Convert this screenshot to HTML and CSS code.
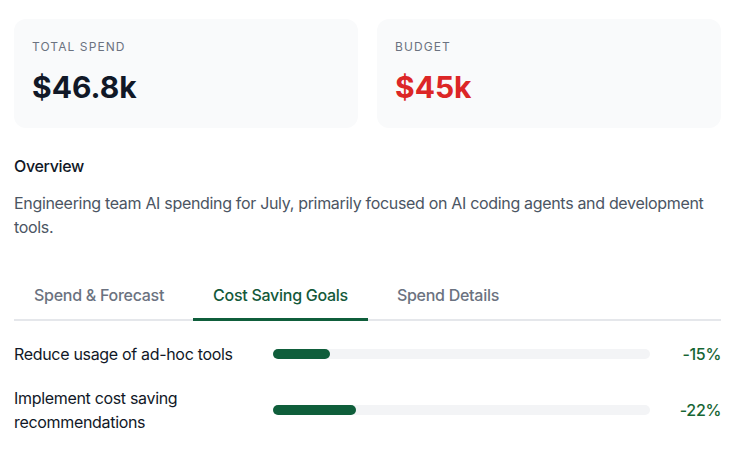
FILE: index.html
```html
<!DOCTYPE html>
<html lang="en">
<head>
  <meta charset="UTF-8">
  <title>AI Spend</title>
  <meta name="viewport" content="width=device-width, initial-scale=1.0">
  <link rel="stylesheet" href="styles.css">
</head>
<body>
  <div class="page">
    <div class="stats">
      <div class="stat-card">
        <div class="stat-label">Total Spend</div>
        <div class="stat-value">$46.8k</div>
      </div>
      <div class="stat-card">
        <div class="stat-label">Budget</div>
        <div class="stat-value over">$45k</div>
      </div>
    </div>

    <h3 class="section-title">Overview</h3>
    <p class="overview">Engineering team AI spending for July, primarily focused on AI coding agents and development tools.</p>

    <div class="tabs">
      <button class="tab">Spend &amp; Forecast</button>
      <button class="tab active">Cost Saving Goals</button>
      <button class="tab">Spend Details</button>
    </div>

    <div class="goals">
      <div class="goal">
        <div class="goal-name">Reduce usage of ad-hoc tools</div>
        <div class="goal-bar"><div class="goal-fill" style="width: 15%"></div></div>
        <div class="goal-pct">-15%</div>
      </div>
      <div class="goal">
        <div class="goal-name">Implement cost saving recommendations</div>
        <div class="goal-bar"><div class="goal-fill" style="width: 22%"></div></div>
        <div class="goal-pct">-22%</div>
      </div>
    </div>
  </div>
</body>
</html>
```

FILE: styles.css
```css
* { box-sizing: border-box; }
body {
  margin: 0;
  font-family: Inter, "Noto Sans", sans-serif;
  background: #fff;
  color: #111827;
}
.page {
  width: 707px;
  margin-left: 14px;
  padding-top: 19px;
}
.stats {
  display: grid;
  grid-template-columns: 1fr 1fr;
  gap: 19px;
}
.stat-card {
  background: #f9fafb;
  border-radius: 12px;
  padding: 20px 18px 23px;
}
.stat-label {
  font-size: 12px;
  line-height: 16px;
  text-transform: uppercase;
  letter-spacing: 0.09em;
  color: #6b7280;
}
.stat-value {
  margin-top: 14px;
  font-size: 30px;
  line-height: 36px;
  font-weight: 700;
  color: #111827;
}
.stat-value.over {
  color: #dc2626;
}
.section-title {
  margin: 26px 0 0;
  font-size: 16px;
  line-height: 24px;
  font-weight: 500;
  letter-spacing: -0.02em;
}
.overview {
  margin: 13px 0 0;
  font-size: 16px;
  line-height: 24px;
  letter-spacing: -0.02em;
  color: #4b5563;
}
.tabs {
  display: flex;
  gap: 9px;
  margin-top: 33px;
  border-bottom: 2px solid #e5e7eb;
}
.tab {
  font-family: inherit;
  font-size: 16px;
  line-height: 24px;
  font-weight: 500;
  letter-spacing: -0.017em;
  color: #6b7280;
  background: none;
  border: none;
  border-bottom: 3px solid transparent;
  margin-bottom: -2px;
  padding: 11px 20px 11px;
  cursor: pointer;
}
.tab.active {
  color: #14593a;
  border-bottom-color: #0f5e3b;
}
.goals {
  display: flex;
  flex-direction: column;
  gap: 20px;
  margin-top: 21px;
}
.goal {
  display: grid;
  grid-template-columns: 240px 1fr 56px;
  column-gap: 19px;
  align-items: center;
}
.goal-name {
  font-size: 16px;
  line-height: 24px;
  letter-spacing: -0.02em;
  color: #111827;
}
.goal-bar {
  height: 10px;
  border-radius: 5px;
  background: #f3f4f6;
  margin-right: -4px;
}
.goal-fill {
  height: 100%;
  border-radius: 5px;
  background: #0f5e3b;
}
.goal-pct {
  margin-left: -4px;
  text-align: right;
  font-size: 16px;
  line-height: 24px;
  font-weight: 500;
  letter-spacing: -0.02em;
  color: #166534;
}
```
